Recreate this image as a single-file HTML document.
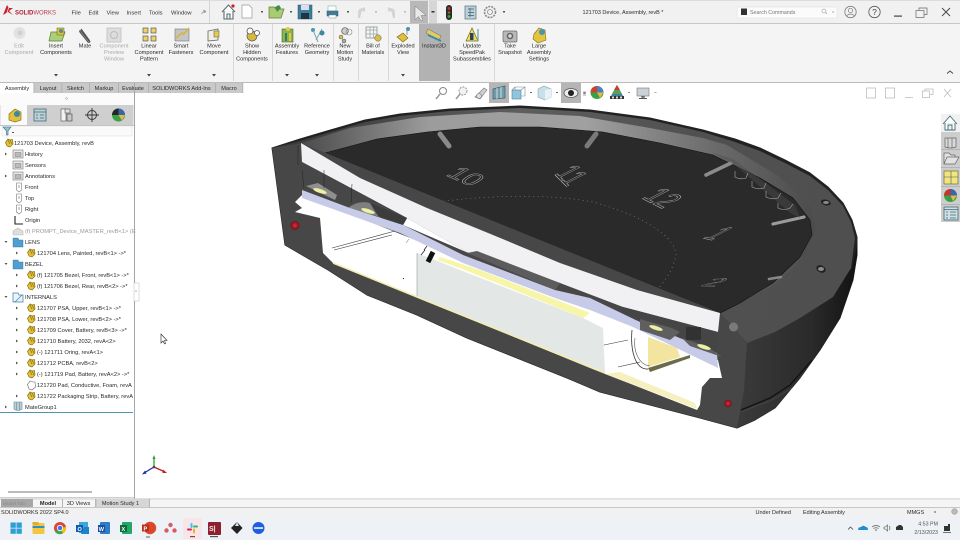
<!DOCTYPE html>
<html><head><meta charset="utf-8"><title>SOLIDWORKS</title>
<style>
html,body{margin:0;padding:0;width:960px;height:540px;overflow:hidden;background:#fff}
svg{display:block;position:absolute;left:0;top:0}
text{font-family:"Liberation Sans",sans-serif;font-size:5.6px;fill:#2a2a2a}
.r text{text-anchor:middle}
.m text{font-size:5.8px;fill:#333}
.t text{font-size:5.7px;fill:#2a2a2a}
.d{fill:#a8a8a8!important}
.n{fill:none;stroke:#b8b8b8;stroke-width:.28px;font-size:14px}
</style></head><body>
<svg width="960" height="540" viewBox="0 0 960 540" xmlns="http://www.w3.org/2000/svg">
<defs>
<linearGradient id="gw" x1="300" x2="820" y1="0" y2="0" gradientUnits="userSpaceOnUse"><stop offset="0" stop-color="#4a4a4a"/><stop offset=".25" stop-color="#9c9c9c"/><stop offset=".55" stop-color="#a0a0a0"/><stop offset=".8" stop-color="#6a6a6a"/><stop offset="1" stop-color="#4a4a4a"/></linearGradient>
<linearGradient id="gb" x1="300" x2="860" y1="110" y2="300" gradientUnits="userSpaceOnUse"><stop offset="0" stop-color="#3a3a3a"/><stop offset=".35" stop-color="#5e5e5e"/><stop offset=".65" stop-color="#505050"/><stop offset="1" stop-color="#4f4f4f"/></linearGradient>
<linearGradient id="gl" x1="740" x2="860" y1="0" y2="0" gradientUnits="userSpaceOnUse"><stop offset="0" stop-color="#3a3a3a"/><stop offset=".6" stop-color="#2a2a2a"/><stop offset="1" stop-color="#111"/></linearGradient>
<radialGradient id="red"><stop offset="0" stop-color="#d8303a"/><stop offset="1" stop-color="#70101a"/></radialGradient>
<g id="p"><path d="M-3.5,-.5 L-1,-4 1,-3 3.5,-3.5 4,1 1,4 -2,3Z" fill="#e3c23a" stroke="#8a7215" stroke-width=".7"/><path d="M-1,-3 L1,1 M1,-3 L3,1" stroke="#7a6510" stroke-width=".6"/></g>
<g id="f"><rect x="-5" y="-4" width="10" height="8" fill="#e8e8e8" stroke="#777" stroke-width=".6"/><rect x="-3" y="-1.5" width="6" height="4" fill="#bbb" stroke="#666" stroke-width=".4"/></g>
<g id="pl"><path d="M-2.5,-4 H2.5 V3 L0,5 -2.5,3Z" fill="#fff" stroke="#777" stroke-width=".6"/><path d="M0,-2 V1" stroke="#666" stroke-width=".6"/></g>
</defs>

<!-- title bar -->
<rect x="0" y="0" width="960" height="23" fill="#f1f1f1"/>
<rect x="0" y="0" width="960" height="1" fill="#dcdcdc"/>
<rect x="0" y="23" width="960" height="1" fill="#c6c6c6"/>
<rect x="0" y="24" width="960" height="58" fill="#f4f4f4"/>
<rect x="0" y="82" width="960" height="1" fill="#bcbcbc"/>
<path d="M3,15 L7,5 9,8 13,8 9,11 13,15 8,12Z" fill="#c8202c"/>
<path d="M6,15 L9,7" stroke="#f1f1f1" stroke-width=".7"/>
<text x="15" y="14.5" style="font-size:6px;font-weight:bold"><tspan style="fill:#b02030">SOLID</tspan><tspan style="font-weight:normal;fill:#b04050">WORKS</tspan></text>
<g class="m"><text x="71.5" y="14.5">File</text><text x="88.5" y="14.5">Edit</text><text x="106.5" y="14.5">View</text><text x="126.5" y="14.5">Insert</text><text x="149" y="14.5">Tools</text><text x="171" y="14.5">Window</text></g>
<path d="M201,14 L204,11 203,10 206,11 205,13 204,12Z" fill="#999" stroke="#999" stroke-width=".5"/>
<rect x="209" y="1" width="1" height="22" fill="#d4d4d4"/>
<!-- quick access -->
<path d="M222,12 L228.500,5 235,12 M224,11 V19 H233 V11 M227,19 V14 H230 V19" fill="#fff" stroke="#5a6b70" stroke-width="1.1"/>
<circle cx="233" cy="6" r="1.6" fill="#d02020"/>
<path d="M242,5 H249 L252,8 V18 H242Z" fill="#fdfdfd" stroke="#9a9a9a" stroke-width=".7"/>
<rect x="261" y="11" width="2" height="1.500" fill="#555"/>
<path d="M269,18 V7 H274 L276,9 H284 L281,18Z" fill="#a9cc70" stroke="#66783f" stroke-width=".7"/>
<path d="M275,7 L279,5 281,8 277,12Z" fill="#3f8e50"/>
<rect x="290" y="11" width="2" height="1.500" fill="#555"/>
<rect x="298" y="5" width="14" height="14" fill="#3c7f99" stroke="#27566a" stroke-width=".5"/><rect x="301" y="5" width="8" height="5" fill="#dde"/><rect x="301" y="13" width="8" height="6" fill="#234"/>
<rect x="318" y="11" width="2" height="1.500" fill="#555"/>
<rect x="328" y="6" width="8" height="5" fill="#fff" stroke="#6a8" stroke-width=".5"/><rect x="327" y="11" width="11" height="5" fill="#3f7c9a" stroke="#2b5a70" stroke-width=".5"/><rect x="329" y="15" width="7" height="3" fill="#fff" stroke="#777" stroke-width=".4"/>
<rect x="347" y="11" width="2" height="1.500" fill="#555"/>
<path d="M358,13 Q358,8 363,8 L365,7 V12 L363,11 Q361,11 361,14 L360,18 H358Z" fill="#d4d4d4"/>
<rect x="375" y="11" width="2" height="1.500" fill="#bbb"/>
<path d="M395,13 Q395,8 390,8 L388,7 V12 L390,11 Q392,11 392,14 L393,18 H395Z" fill="#d4d4d4"/>
<rect x="404" y="11" width="2" height="1.500" fill="#bbb"/>
<rect x="410" y="1" width="18" height="22" fill="#b8b8b8"/>
<rect x="429" y="1" width="8" height="22" fill="#d6d6d6"/>
<path d="M415,6 L415,20 418.500,16.500 421,21 423,20 421,15.500 426,15.500Z" fill="#e8e8e8" stroke="#777" stroke-width=".5"/>
<rect x="431.500" y="11" width="3" height="1.500" fill="#333"/>
<rect x="446" y="5" width="6" height="15" rx="3" fill="#2a2a2a"/><circle cx="449" cy="8.500" r="1.500" fill="#c03030"/><circle cx="449" cy="12.500" r="1.300" fill="#8a6a20"/><circle cx="449" cy="16.500" r="1.500" fill="#35a040"/>
<rect x="465" y="6" width="11" height="13" fill="#bcd0d8" stroke="#4d7080" stroke-width=".7"/><path d="M470,8 V17 M468,9 H474 M468,12.500 H474 M468,15.500 H474" stroke="#3d6070" stroke-width=".7"/>
<circle cx="490" cy="12" r="5.500" fill="none" stroke="#8a8a8a" stroke-width="1.600" stroke-dasharray="2 1"/><circle cx="490" cy="12" r="2.500" fill="none" stroke="#8a8a8a" stroke-width=".8"/>
<rect x="503" y="11" width="2" height="1.500" fill="#555"/>
<text x="623" y="14" style="text-anchor:middle;font-size:5.5px">121703 Device, Assembly, revB *</text>
<!-- search -->
<rect x="737" y="7" width="100" height="11" fill="#fbfbfb" stroke="#dcdcdc" stroke-width=".5"/>
<rect x="741" y="8.500" width="6" height="6.500" fill="#333"/>
<text x="750" y="14" style="font-size:5.3px;fill:#777">Search Commands</text>
<circle cx="824" cy="11" r="2" fill="none" stroke="#999" stroke-width=".6"/><path d="M825.500,12.500 L827,14" stroke="#999" stroke-width=".6"/>
<rect x="832" y="11.500" width="2" height="1" fill="#aaa"/>
<circle cx="850.500" cy="12" r="5.700" fill="none" stroke="#7a7a7a" stroke-width=".8"/><circle cx="850.500" cy="10.500" r="2.200" fill="none" stroke="#7a7a7a" stroke-width=".7"/><path d="M846.500,16 Q850.500,12 854.500,16" fill="none" stroke="#7a7a7a" stroke-width=".7"/>
<circle cx="874.500" cy="12" r="5.700" fill="none" stroke="#555" stroke-width=".8"/><text x="874.500" y="15" style="text-anchor:middle;font-size:8.500px;fill:#444">?</text>
<rect x="894" y="15.500" width="8" height="1.200" fill="#444"/>
<rect x="916" y="10.500" width="8" height="7" fill="#f1f1f1" stroke="#666" stroke-width=".7"/><path d="M919,10 V8 H927 V14.500 H924.500" fill="none" stroke="#666" stroke-width=".7"/>
<path d="M942,8 L950,16 M950,8 L942,16" stroke="#444" stroke-width=".9"/>

<!-- ribbon separators -->
<g fill="#d8d8d8"><rect x="233" y="24" width="1" height="57"/><rect x="272" y="24" width="1" height="57"/><rect x="333" y="24" width="1" height="57"/><rect x="358" y="24" width="1" height="57"/><rect x="388" y="24" width="1" height="57"/><rect x="494" y="24" width="1" height="57"/></g>
<rect x="419" y="24" width="31" height="57" fill="#b2b2b2"/>
<!-- ribbon icons -->
<g opacity=".75"><circle cx="19.500" cy="33" r="6" fill="#dcdcdc"/><circle cx="20" cy="33" r="2.500" fill="#c4c4c4"/></g>
<path d="M49,41 L51,32 H57 L60,29 65,32 62,41Z" fill="#a9cf79" stroke="#5f7d3a" stroke-width=".7"/><rect x="57" y="28" width="7" height="7" fill="#e1bf3a" stroke="#6d6010" stroke-width=".5"/><circle cx="61" cy="31" r="2" fill="#4a8fa8"/>
<path d="M81,29 L89,40 Q91,43 88,42 L80,32 Q79,30 81,31 L89,41" fill="none" stroke="#555" stroke-width="1.200"/>
<rect x="107" y="28" width="14" height="14" fill="#ddd" stroke="#c8c8c8"/><circle cx="114" cy="35" r="3.500" fill="none" stroke="#bbb"/>
<g fill="#ead16b" stroke="#444" stroke-width=".6"><rect x="143" y="28" width="5" height="5"/><rect x="151" y="28" width="5" height="5"/><rect x="143" y="36" width="5" height="5"/><rect x="151" y="36" width="5" height="5"/></g>
<rect x="175" y="29" width="14" height="12" fill="#c4c6c6" stroke="#777" stroke-width=".6"/><path d="M183,35 L189,28 M176,38 L183,32" stroke="#d8b53a" stroke-width="1.600"/>
<path d="M208,31 L218,29 V40 L208,41Z" fill="#efefe5" stroke="#666" stroke-width=".8"/><rect x="214" y="31" width="5" height="6" fill="#e6c94a" stroke="#555" stroke-width=".5"/>
<circle cx="252" cy="36" r="5" fill="#d9b83e" stroke="#555" stroke-width=".7"/><circle cx="250" cy="31" r="3" fill="#fff" stroke="#555" stroke-width=".8"/><circle cx="257" cy="33" r="2.500" fill="#fff" stroke="#555" stroke-width=".8"/>
<rect x="282" y="29" width="11" height="13" fill="#89b54a" stroke="#4b6a22" stroke-width=".6"/><rect x="285" y="33" width="2" height="8" fill="#2f7b78"/><rect x="289" y="33" width="2" height="8" fill="#e7c848"/><circle cx="288" cy="29" r="2" fill="#e7c848"/>
<circle cx="313" cy="30" r="2" fill="#4a94b0"/><path d="M313,30 L318,42 M322,29 L316,40" stroke="#7aa" stroke-width="1"/><circle cx="322" cy="33" r="2.500" fill="#3f86a2"/>
<circle cx="345" cy="31" r="3.300" fill="#ccc" stroke="#555" stroke-width=".7"/><circle cx="349" cy="32" r="3" fill="none" stroke="#888" stroke-width=".6"/><circle cx="341" cy="37" r="2" fill="#e0c040" stroke="#555" stroke-width=".5"/><circle cx="344" cy="41" r="2" fill="#aaa" stroke="#555" stroke-width=".5"/>
<rect x="366" y="27" width="11" height="11" fill="#f3f3f3" stroke="#7a8a7f" stroke-width=".7"/><path d="M366,30 H377 M366,34 H377 M370,27 V38 M373.500,27 V38" stroke="#7a8a7f" stroke-width=".5"/><circle cx="378" cy="38" r="3.200" fill="#d9bf42" stroke="#556" stroke-width=".5"/>
<path d="M397,37 L403,33 408,38 403,42Z" fill="#e0bf3c" stroke="#7a6312" stroke-width=".6"/><path d="M407,30 V35" stroke="#777" stroke-width=".7"/><circle cx="408" cy="29" r="2" fill="#4a94b0"/>
<path d="M428,29 L441,36 439,40 426,33Z" fill="#dfcd63" stroke="#666" stroke-width=".5"/><path d="M428,35 L441,41" stroke="#3a8aa8" stroke-width="2"/>
<path d="M466,41 L472,28 478,41Z" fill="#f4db5e" stroke="#6a6a20" stroke-width=".7"/><rect x="470" y="33" width="3.500" height="7" fill="#2c4260"/><path d="M478,29 V41" stroke="#6aa" stroke-width="1.300"/>
<rect x="503" y="31" width="14" height="11" rx="1.500" fill="#b8b8b8" stroke="#666" stroke-width=".7"/><circle cx="510" cy="36" r="3.300" fill="#666"/><circle cx="510" cy="36" r="1.700" fill="#ddd"/>
<path d="M534,34 L539,28 545,30 546,40 538,43 533,39Z" fill="#e1c53f" stroke="#867116" stroke-width=".6"/><circle cx="542" cy="32" r="3" fill="#4a95ad"/>
<g fill="#444"><path d="M54,74 H58 L56,76.500Z"/><path d="M147,74 H151 L149,76.500Z"/><path d="M212,74 H216 L214,76.500Z"/><path d="M285,74 H289 L287,76.500Z"/><path d="M315,74 H319 L317,76.500Z"/><path d="M401,74 H405 L403,76.500Z"/></g>
<path d="M947,73.500 L950,71 953,73.500" fill="none" stroke="#444" stroke-width=".9"/>
<!-- ribbon labels -->
<g class="r">
<text x="19" y="47.500" class="d">Edit</text><text x="19" y="54" class="d">Component</text>
<text x="56" y="47.500">Insert</text><text x="56" y="54">Components</text>
<text x="85" y="47.500">Mate</text>
<text x="114" y="47.500" class="d">Component</text><text x="114" y="54" class="d">Preview</text><text x="114" y="60.500" class="d">Window</text>
<text x="149" y="47.500">Linear</text><text x="149" y="54">Component</text><text x="149" y="60.500">Pattern</text>
<text x="181" y="47.500">Smart</text><text x="181" y="54">Fasteners</text>
<text x="214" y="47.500">Move</text><text x="214" y="54">Component</text>
<text x="252" y="47.500">Show</text><text x="252" y="54">Hidden</text><text x="252" y="60.500">Components</text>
<text x="287" y="47.500">Assembly</text><text x="287" y="54">Features</text>
<text x="317" y="47.500">Reference</text><text x="317" y="54">Geometry</text>
<text x="345" y="47.500">New</text><text x="345" y="54">Motion</text><text x="345" y="60.500">Study</text>
<text x="373" y="47.500">Bill of</text><text x="373" y="54">Materials</text>
<text x="403" y="47.500">Exploded</text><text x="403" y="54">View</text>
<text x="434" y="47.500">Instant3D</text>
<text x="472" y="47.500">Update</text><text x="472" y="54">SpeedPak</text><text x="472" y="60.500">Subassemblies</text>
<text x="510" y="47.500">Take</text><text x="510" y="54">Snapshot</text>
<text x="539" y="47.500">Large</text><text x="539" y="54">Assembly</text><text x="539" y="60.500">Settings</text>
</g>
<!-- tabs -->
<rect x="34" y="83" width="209" height="10" fill="#c9c9c9"/>
<g fill="#a8a8a8"><rect x="33.500" y="83" width=".7" height="10"/><rect x="61.500" y="83" width=".7" height="10"/><rect x="89" y="83" width=".7" height="10"/><rect x="118" y="83" width=".7" height="10"/><rect x="148" y="83" width=".7" height="10"/><rect x="215" y="83" width=".7" height="10"/><rect x="242.500" y="83" width=".7" height="10"/></g>
<g class="r"><text x="17" y="90">Assembly</text><text x="48" y="90">Layout</text><text x="75.500" y="90">Sketch</text><text x="104" y="90">Markup</text><text x="133" y="90">Evaluate</text><text x="181.500" y="90">SOLIDWORKS Add-Ins</text><text x="229" y="90">Macro</text></g>

<!-- 3D MODEL -->
<path d="M272,148 L300,139 327,131 365,120 400,114 450,109 520,106 590,110 650,118 703,130 735,139 760,148 785,160 810,173 828,187 843,203 852,220 857,237 857,255 853,280 840,318 820,350 800,378 775,408 755,420 737,428 700,418 650,405 600,392 567,378 517,358 467,338 417,315 367,295 328,270 285,245Z" fill="#222" stroke="#222" stroke-linejoin="round"/>
<!-- outer wall right -->
<path d="M747,343 L790,322 830,296 852,268 857,245 857,255 853,280 840,318 820,350 800,378 775,408 755,420 737,428Z" fill="url(#gl)"/>
<path d="M741,410 L770,398 790,385 812,360" fill="none" stroke="#111" stroke-width="1.300"/>
<path d="M741,412 L772,400 792,388" fill="none" stroke="#555" stroke-width=".5"/>
<!-- bezel -->
<path d="M272,148 L300,141 327,133 365,122 400,116 450,111 520,108 590,112 650,120 703,132 735,142 760,151 785,163 810,176 828,190 843,206 851,222 855,238 851,268 833,297 800,318 775,332 747,343 720,313 301,143Z" fill="url(#gb)"/>
<!-- inner wall -->
<path d="M302,143 L350,128 420,117 500,112 580,116 650,128 703,138 727,145 777,175 810,205 816,228 805,258 773,285 740,303 720,313 560,263 460,230 360,180Z" fill="url(#gw)"/>
<!-- dial face -->
<path d="M325,153 L377,139 427,132 480,127 540,127 603,132 660,143 713,155 760,178 793,198 810,220 812,235 800,257 773,283 740,303 720,313 637,290 560,263 493,235 427,208 360,178Z" fill="#2a2a2a" stroke="#111" stroke-width=".6"/>
<!-- dial ticks -->
<g stroke-linecap="round" fill="none">
<path d="M440,134 L449,146" stroke-width="5" stroke="#8a8a8a"/>
<path d="M596,134 L587,146" stroke-width="5" stroke="#7a7a7a"/>
<path d="M706,175 L731,163" stroke-width="3.600" stroke="#8c8c8c"/>
<path d="M773,224 L804,217" stroke-width="3.200" stroke="#9c9c9c"/>
<path d="M769,279 L781,277" stroke-width="2.600" stroke="#888"/>
</g>
<path d="M713,153 L733,159 795,205 800,218 790,213 735,165Z" fill="#4d4d4d" opacity=".45"/>
<g fill="none" stroke="#aaa" stroke-width=".6">
<path d="M735,171 L735,177 Q740,180 746,178 L748,173"/><path d="M752,181 L752,187 Q758,190 764,188 L766,183"/><path d="M766,191 L766,197 Q772,200 778,198 L781,193"/><path d="M778,203 L778,208 Q784,211 790,208 L793,204"/>
</g>
<!-- dial numbers -->
<text transform="matrix(1.700 .75 -1.600 .95 445 175)" class="n">10</text>
<text transform="matrix(.9 .9 -2.200 1.100 554 174)" class="n">11</text>
<text transform="matrix(1.400 .7 -2.200 1.150 641 198)" class="n">12</text>
<text transform="matrix(1.400 .3 -2.400 1.200 702 238)" class="n">1</text>
<text transform="matrix(1.900 .1 -1.600 .85 700 286)" class="n">2</text>
<path d="M430,203 C470,197 540,192 593,202 C640,215 675,235 676,255 C672,275 660,287 652,294" fill="none" stroke="#8e8e8e" stroke-width=".6" stroke-dasharray="1 3.500"/>
<!-- screws -->
<ellipse cx="826" cy="202.500" rx="5" ry="2.800" fill="#222" transform="rotate(15 826 202)"/><ellipse cx="826" cy="202.500" rx="3" ry="1.500" fill="#8a8a8a"/>
<ellipse cx="821" cy="269" rx="5" ry="3.500" fill="#222" transform="rotate(25 821 269)"/><ellipse cx="821" cy="269" rx="3" ry="2" fill="#8a8a8a"/>
<!-- section left face -->
<path d="M272,148 L301,143 720,313 747,343 744,390 737,428 700,418 650,405 600,392 567,378 517,358 467,338 417,315 367,295 328,270 285,245Z" fill="#474747"/>
<!-- section white cavity -->
<path d="M302,195 L718,360 722,378 710,378 702,387 700,405 697,410 590,368 417,297 333,263 323,253 320,218 295,212 302,208 295,202Z" fill="#fff"/>
<!-- band white -->
<path d="M301,143 L360,178 427,208 493,235 560,263 637,290 720,313 718,332 623,307 560,283 467,252 407,218 302,162Z" fill="#f1f1f3"/>
<path d="M407,218 L467,252 555,290 403,225Z" fill="#fff"/>
<!-- dark chamber behind -->
<path d="M302,162 L407,218 403,225 350,208 302,190Z" fill="#474747"/>
<path d="M623,307 L718,332 717,353 623,318Z" fill="#454545"/>
<!-- leds -->
<path d="M306,186 L318,183 337,195 335,200Z" fill="#8f8f8f"/><ellipse cx="320" cy="191" rx="7" ry="2" fill="#eef0a4" transform="rotate(18 320 191)"/>
<path d="M348,208 Q358,200 370,203 L380,217 Q362,212 348,208Z" fill="#7f7f7f"/><ellipse cx="368" cy="211" rx="7" ry="2" fill="#eef0a4" transform="rotate(18 368 211)"/>
<path d="M370,203 L407,218 403,225 378,216Z" fill="#3c3c3c"/>
<!-- lilac band -->
<path d="M302,190 L350,208 403,225 463,255 555,290 590,298 640,322 717,353 718,368 633,327 590,310 555,298 463,263 400,233 302,198Z" fill="#c8cbe8"/>
<path d="M467,253 L477,251 560,283 555,290 472,255Z" fill="#5c5c5c"/>
<path d="M640,319 L672,328 680,332 670,340 640,330Z" fill="#5f5f5f"/>
<ellipse cx="656" cy="328" rx="7" ry="2" fill="#eef0a4" transform="rotate(18 656 328)"/>
<path d="M682,338 L708,347 722,357 690,346Z" fill="#5f5f5f"/>
<ellipse cx="704" cy="347" rx="7" ry="2" fill="#eef0a4" transform="rotate(18 704 347)"/>
<rect x="686" y="327" width="15" height="13" fill="#323232"/>
<!-- gray block -->
<path d="M417,253 L440,262 465,272 583,318 603,328 605,373 417,297Z" fill="#e3e7e6"/>
<path d="M417,253 V297" stroke="#888" stroke-width=".5"/>
<path d="M440,257 L480,270 590,313 583,318 465,270 438,260Z" fill="#f6f5a8"/>
<path d="M333,263 L417,297 605,373" fill="none" stroke="#f3eeb0" stroke-width="1.500"/>
<path d="M605,374 L697,409 695,403 620,372Z" fill="#f6efc0"/>
<!-- battery -->
<path d="M648,337 L677,348 680,357 648,367Z" fill="#f3e5a0"/>
<path d="M648,368 L690,355 690,358 650,372Z" fill="#6b6b4a"/>
<path d="M632,330 C630,352 636,370 648,369" fill="none" stroke="#333" stroke-width=".8"/>
<path d="M635,338 C633,353 640,365 650,366" fill="none" stroke="#555" stroke-width=".6"/>
<path d="M604,345 L628,340 M618,367 L640,362" stroke="#333" stroke-width=".6"/>
<!-- internal lines -->
<path d="M332,248 L395,231 M334,250 L392,235" stroke="#333" stroke-width=".6"/>
<path d="M428,262 L433,252" stroke="#111" stroke-width="5"/>
<path d="M424,250 L427,246 M421,255 L425,250" stroke="#111" stroke-width=".7"/>
<path d="M406,243 L409,239" stroke="#666" stroke-width=".5"/>
<rect x="403" y="278" width="1" height="1" fill="#222"/>
<path d="M298,145 L298,165 M302,170 L304,188 M324,170 L324,188 M352,184 L351,203" stroke="#222" stroke-width=".5"/>
<circle cx="295" cy="225.500" r="4.500" fill="url(#red)"/>
<path d="M299,226 L315,222" stroke="#8a3030" stroke-width=".4"/>
<circle cx="728" cy="403.500" r="3.800" fill="url(#red)"/>
<circle cx="733.500" cy="327" r="4.500" fill="#7a7a7a"/>

<!-- heads up toolbar -->
<rect x="489" y="83" width="20" height="20" fill="#b5b5b5"/>
<rect x="561" y="83" width="20" height="20" fill="#b5b5b5"/>
<circle cx="443" cy="91" r="3.500" fill="#fff" stroke="#888" stroke-width="1"/><path d="M440,94 L436,99" stroke="#999" stroke-width="1.500"/>
<circle cx="463" cy="91" r="4" fill="#f2f2f2" stroke="#999" stroke-width="1" stroke-dasharray="2 1"/><path d="M460,94 L456,99" stroke="#999" stroke-width="1.500"/>
<path d="M475,97 L484,88 487,90 480,99Z" fill="#cfcfcf" stroke="#888" stroke-width=".7"/><circle cx="479" cy="96" r="2.500" fill="#ddd" stroke="#777" stroke-width=".6"/>
<path d="M493,89 L505,86 V98 L493,99Z" fill="#6f9cac" stroke="#40606c" stroke-width=".7"/><path d="M497,88 V99 M501,87 V98" stroke="#e8eef0" stroke-width=".8"/>
<rect x="512" y="90" width="9" height="9" fill="#8fc5de" stroke="#5a7f8f" stroke-width=".6"/><path d="M515,90 V87 H525 V96 H521 M515,87 L512,90 M525,87 L521,90" fill="none" stroke="#7a8a90" stroke-width=".6"/>
<rect x="530" y="92" width="2" height="1" fill="#666"/>
<path d="M538,89 L544,86 551,89 V97 L545,100 538,97Z" fill="#c7e0ea" stroke="#8aa" stroke-width=".6"/><path d="M545,90 V100 L551,97 V89Z" fill="#e8f1f5"/>
<rect x="556" y="92" width="2" height="1" fill="#666"/>
<ellipse cx="571" cy="93" rx="7" ry="4.500" fill="#eee" stroke="#555" stroke-width=".8"/><circle cx="571" cy="93" r="3" fill="#222"/>
<rect x="583" y="91" width="3" height="5" fill="#d0d0d0"/><rect x="583.500" y="92.500" width="2" height="1" fill="#333"/>
<circle cx="597" cy="92.500" r="6.500" fill="#3aa046"/><path d="M597,92.500 L590.500,92.500 A6.500,6.500 0 0 1 597,86Z" fill="#d0402a"/><path d="M597,92.500 V86 A6.500,6.500 0 0 1 603.500,92.500Z" fill="#4a7fc0"/><path d="M597,92.500 L603.500,92.500 L600,98Z" fill="#e8b840"/>
<path d="M611,96 L617,85 623,96Z" fill="#3f7fa0"/><path d="M612,94 L617,86 622,94Z" fill="#5aa050"/><path d="M614,90 L617,85 620,90Z" fill="#c04030"/><rect x="610" y="96" width="14" height="3" fill="#333"/><rect x="612" y="96.500" width="2" height="2" fill="#ddd"/><rect x="616" y="96.500" width="2" height="2" fill="#ddd"/><rect x="620" y="96.500" width="2" height="2" fill="#ddd"/>
<rect x="628" y="92" width="2" height="1" fill="#888"/>
<rect x="637" y="88" width="12" height="8" fill="#c8d2d8" stroke="#777" stroke-width=".6"/><path d="M641,97 H645 M643,96 V98" stroke="#555"/><rect x="639" y="98" width="8" height="1" fill="#555"/>
<rect x="654.500" y="92" width="2" height="1" fill="#aaa"/>
<!-- graphics window controls -->
<g fill="none" stroke="#bdbdbd" stroke-width=".8"><rect x="866.500" y="88" width="9" height="10"/><rect x="885.500" y="88" width="9" height="10"/><path d="M905,97.500 H913"/><rect x="922.500" y="91" width="7" height="6.500"/><path d="M925,91 V89 H933 V94.500 H930"/><path d="M944,89 L951,97 M951,89 L944,97"/></g>

<!-- right task pane -->
<rect x="941" y="114" width="19" height="108" fill="#cdcdcd"/>
<rect x="941" y="114" width="19" height="18" fill="#f1f1f1"/>
<g fill="#a9a9a9"><rect x="941" y="149" width="19" height=".7"/><rect x="941" y="167" width="19" height=".7"/><rect x="941" y="186" width="19" height=".7"/><rect x="941" y="204" width="19" height=".7"/></g>
<path d="M943,124 L950,116 957,124 M945,123 V130 H955 V123 M948,130 V125 H952 V130" fill="#fff" stroke="#3f6b78" stroke-width=".9"/>
<path d="M945,138 H956 V147 Q950,149 945,147Z M948,138 V148 M952,138 V148" fill="#d8d8d8" stroke="#666" stroke-width=".7"/>
<path d="M944,164 V153 H949 L951,155 H955 V157 M944,164 L947,157 H959 L955,164Z" fill="#e2e2e2" stroke="#666" stroke-width=".7"/>
<rect x="944" y="171" width="14" height="13" fill="#f0e67f" stroke="#6f6f30" stroke-width=".7"/><path d="M951,171 V184 M944,177 H958" stroke="#555" stroke-width=".6"/>
<circle cx="950.500" cy="195.500" r="6.500" fill="#3aa046"/><path d="M950.500,195.500 H944 A6.500,6.500 0 0 1 950.500,189Z" fill="#c8342a"/><path d="M950.500,195.500 V189 A6.500,6.500 0 0 1 957,195.500Z" fill="#3a63b0"/><path d="M950.500,195.500 H957 L953,201Z" fill="#e8b840"/>
<rect x="944" y="207" width="14" height="13" fill="#cfdfe4" stroke="#3f6b78" stroke-width=".8"/><path d="M944,209.500 H958 M946,212 H948 M950,212 H956 M946,215 H948 M950,215 H956 M946,218 H948 M950,218 H956" stroke="#3f6b78" stroke-width=".8"/>

<!-- left panel -->
<rect x="0" y="93" width="134" height="406" fill="#fff"/>
<rect x="134" y="83" width="1" height="416" fill="#a6a6a6"/>
<rect x="0" y="93" width="134" height="12" fill="#fbfbfb"/>
<circle cx="66.500" cy="98.500" r="1" fill="none" stroke="#999" stroke-width=".5"/>
<rect x="0" y="105" width="134" height="20" fill="#e6e6e6"/>
<rect x="1" y="105" width="26" height="20" fill="#fafafa"/>
<rect x="27" y="105" width="26" height="20" fill="#cfcfcf"/><rect x="53" y="105" width="26" height="20" fill="#cfcfcf"/><rect x="79" y="105" width="26" height="20" fill="#cfcfcf"/><rect x="105" y="105" width="28" height="20" fill="#cfcfcf"/>
<path d="M9,114 L15,109 21,112 21,120 15,122 9,120Z" fill="#e2c03a" stroke="#7a6512" stroke-width=".6"/><circle cx="17" cy="114" r="3" fill="#3d87a3"/>
<rect x="34" y="109" width="12" height="12" fill="#bcd0d6" stroke="#3f6b78" stroke-width=".8"/><path d="M34,112 H46 M36,115 H38 M40,115 H44 M36,118 H38 M40,118 H44" stroke="#3f6b78" stroke-width=".7"/>
<rect x="61" y="109" width="5" height="12" fill="#f2f2f2" stroke="#666" stroke-width=".7"/><rect x="67" y="114" width="5" height="7" fill="#c7c7c7" stroke="#555" stroke-width=".7"/><rect x="65" y="109" width="5" height="4" fill="#ddd" stroke="#555" stroke-width=".6"/>
<circle cx="92" cy="115" r="4.500" fill="none" stroke="#333" stroke-width=".9"/><path d="M92,108 V122 M85,115 H99" stroke="#333" stroke-width=".9"/>
<circle cx="118.500" cy="115" r="6.500" fill="#3aa046"/><path d="M118.500,115 H112 A6.500,6.500 0 0 1 118.500,108.500Z" fill="#262626"/><path d="M118.500,115 V108.500 A6.500,6.500 0 0 1 125,115Z" fill="#3a63b0"/><path d="M118.500,115 H125 L122,120.500Z" fill="#e8b840"/>
<rect x="0" y="125" width="134" height=".7" fill="#aaa"/>
<rect x="2" y="126" width="130" height="10" fill="#fafafa" stroke="#ddd" stroke-width=".5"/>
<path d="M3,127 H11 L8,131 V135 H6.500 V131Z" fill="#8fc4d8" stroke="#3f6b78" stroke-width=".6"/>
<rect x="12" y="132" width="2" height="1" fill="#555"/>
<use href="#p" x="9" y="143"/>
<g class="t">
<text x="14" y="145">121703 Device, Assembly, revB</text>
<text x="25" y="156">History</text>
<text x="25" y="167">Sensors</text>
<text x="25" y="178">Annotations</text>
<text x="25" y="189">Front</text>
<text x="25" y="200">Top</text>
<text x="25" y="211">Right</text>
<text x="25" y="222">Origin</text>
<text x="25" y="233" style="fill:#9a9a9a">(f) PROMPT_Device_MASTER_revB&lt;1&gt; (E</text>
<text x="25" y="244">LENS</text>
<text x="37" y="255">121704 Lens, Painted, revB&lt;1&gt; -&gt;*</text>
<text x="25" y="266">BEZEL</text>
<text x="37" y="277">(f) 121705 Bezel, Front, revB&lt;1&gt; -&gt;*</text>
<text x="37" y="288">(f) 121706 Bezel, Rear, revB&lt;2&gt; -&gt;*</text>
<text x="25" y="299">INTERNALS</text>
<text x="37" y="310">121707 PSA, Upper, revB&lt;1&gt; -&gt;*</text>
<text x="37" y="321">121708 PSA, Lower, revB&lt;2&gt; -&gt;*</text>
<text x="37" y="332">121709 Cover, Battery, revB&lt;3&gt; -&gt;*</text>
<text x="37" y="343">121710 Battery, 2032, revA&lt;2&gt;</text>
<text x="37" y="354">(-) 121711 Oring, revA&lt;1&gt;</text>
<text x="37" y="365">121712 PCBA, revB&lt;2&gt;</text>
<text x="37" y="376">(-) 121719 Pad, Battery, revA&lt;2&gt; -&gt;*</text>
<text x="37" y="387">121720 Pad, Conductive, Foam, revA</text>
<text x="37" y="398">121722 Packaging Strip, Battery, revA</text>
<text x="25" y="409">MateGroup1</text>
</g>
<g><use href="#f" x="18" y="154"/><use href="#f" x="18" y="165"/><use href="#f" x="18" y="176"/>
<use href="#pl" x="19" y="187"/><use href="#pl" x="19" y="198"/><use href="#pl" x="19" y="209"/></g>
<path d="M15,216 V224 H23" fill="none" stroke="#222" stroke-width="1.100"/>
<path d="M13,231 L18,228 23,231 V235 H13Z" fill="#ddd" stroke="#bbb" stroke-width=".6"/>
<g fill="#4f9fd0" stroke="#2d6d94" stroke-width=".4"><path d="M13,238 H18 L19,240 H23 V247 H13Z"/><path d="M13,260 H18 L19,262 H23 V269 H13Z"/></g>
<path d="M13,293 H18 L19,295 H23 V302 H13Z" fill="#eaf4fa" stroke="#3a7ca0" stroke-width=".7"/><path d="M15,302 L22,295" stroke="#3a7ca0" stroke-width=".6"/>
<use href="#p" x="31" y="253"/><use href="#p" x="31" y="275"/><use href="#p" x="31" y="286"/><use href="#p" x="31" y="308"/><use href="#p" x="31" y="319"/><use href="#p" x="31" y="330"/><use href="#p" x="31" y="341"/><use href="#p" x="31" y="352"/><use href="#p" x="31" y="363"/><use href="#p" x="31" y="374"/><use href="#p" x="31" y="396"/>
<path d="M27.500,384.500 L30,381 33,382 35,382 35.500,387 32,390 29,389Z" fill="#fff" stroke="#666" stroke-width=".6"/>
<path d="M14,402 H22 V409 Q18,412 14,409Z M16.500,402 V410 M19.500,402 V410" fill="#b7cfd6" stroke="#6c8a92" stroke-width=".6"/>
<!-- expanders -->
<g fill="#555"><path d="M5,152.500 L7,154 5,155.500Z"/><path d="M5,174.500 L7,176 5,177.500Z"/><path d="M4.500,241 H7.500 L6,243Z"/><path d="M4.500,263 H7.500 L6,265Z"/><path d="M4.500,296 H7.500 L6,298Z"/><path d="M5,405.500 L7,407 5,408.500Z"/>
<path d="M16,251.500 L18,253 16,254.500Z"/><path d="M16,273.500 L18,275 16,276.500Z"/><path d="M16,284.500 L18,286 16,287.500Z"/><path d="M16,306.500 L18,308 16,309.500Z"/><path d="M16,317.500 L18,319 16,320.500Z"/><path d="M16,328.500 L18,330 16,331.500Z"/><path d="M16,339.500 L18,341 16,342.500Z"/><path d="M16,350.500 L18,352 16,353.500Z"/><path d="M16,361.500 L18,363 16,364.500Z"/><path d="M16,372.500 L18,374 16,375.500Z"/><path d="M16,394.500 L18,396 16,397.500Z"/></g>
<rect x="0" y="412" width="133" height="1" fill="#4f93b4"/>
<rect x="134" y="283" width="5" height="18" fill="#fff" stroke="#bbb" stroke-width=".5"/><circle cx="136" cy="291" r=".8" fill="#aaa"/>
<rect x="8" y="491.500" width="84" height="1" fill="#777"/>
<rect x="0" y="497" width="134" height="1" fill="#d0d0d0"/>

<!-- cursor -->
<path d="M161,334 V343 L163,341 164.500,344 165.500,343.500 164.500,340.500 167,340.500Z" fill="#fff" stroke="#222" stroke-width=".6"/>
<!-- triad -->
<path d="M154,467 V457" stroke="#2aa02a" stroke-width="1.300"/><path d="M154,467 L165,472" stroke="#c02020" stroke-width="1.300"/><path d="M154,467 L144,473" stroke="#2030a0" stroke-width="1.300"/>
<path d="M152.500,459 L154,455 155.500,459Z" fill="#2aa02a"/><path d="M163,469.500 L167,473 162.500,473Z" fill="#c02020"/><path d="M145,470.500 L142,474.500 146.500,473.500Z" fill="#2030a0"/>
<circle cx="154" cy="467" r="1.300" fill="#444"/>

<!-- bottom tabs -->
<rect x="0" y="499" width="960" height="8" fill="#f5f5f5"/>
<rect x="0" y="498.500" width="960" height=".8" fill="#c0c0c0"/>
<rect x="1" y="499" width="32" height="8" fill="#a6a6a6"/>
<rect x="95" y="499" width="54" height="8" fill="#d6d6d6"/>
<rect x="62" y="499" width=".7" height="8" fill="#999"/><rect x="95.500" y="499" width=".7" height="8" fill="#999"/><rect x="149" y="499" width=".7" height="8" fill="#999"/>
<text x="48" y="505" style="text-anchor:middle;font-weight:bold;fill:#222">Model</text>
<text x="78.500" y="505" style="text-anchor:middle">3D Views</text>
<text x="120.500" y="505" style="text-anchor:middle">Motion Study 1</text>
<text x="3" y="505" style="font-size:4.800px;fill:#8a8a8a">Model Tab</text>
<rect x="0" y="507" width="960" height=".8" fill="#b8b8b8"/>
<!-- status -->
<rect x="0" y="508" width="960" height="9" fill="#f1f1f1"/>
<text x="1" y="514" style="font-size:5.500px">SOLIDWORKS 2022 SP4.0</text>
<text x="755.500" y="514" style="font-size:5.500px">Under Defined</text>
<text x="803" y="514" style="font-size:5.500px">Editing Assembly</text>
<text x="907" y="514" style="font-size:5.500px">MMGS</text>
<rect x="934" y="511.500" width="2" height="1" fill="#555"/>
<circle cx="954.500" cy="511.500" r="2.800" fill="#bbb" stroke="#888" stroke-width=".5"/>
<!-- taskbar -->
<rect x="0" y="517" width="960" height="23" fill="#eef1f5"/>
<g fill="#2a9fd8"><rect x="10.500" y="522.500" width="5.300" height="5.300"/><rect x="16.500" y="522.500" width="5.300" height="5.300"/><rect x="10.500" y="528.500" width="5.300" height="5.300"/><rect x="16.500" y="528.500" width="5.300" height="5.300"/></g>
<rect x="32.500" y="523" width="12" height="11" rx="1" fill="#f3c640"/><rect x="32.500" y="526" width="12" height="2" fill="#2f8fc0"/><rect x="32.500" y="522" width="6" height="3" fill="#e7ac24"/>
<circle cx="60" cy="528" r="6" fill="#db4437"/><path d="M60,528 L55,532 A6,6 0 0 0 63,533.200Z" fill="#3aa757"/><path d="M60,528 L66,527 A6,6 0 0 1 63,533.200Z" fill="#fbbc05"/><circle cx="60" cy="528" r="2.700" fill="#3b78e7" stroke="#fff" stroke-width=".8"/>
<rect x="79" y="522" width="9" height="11" fill="#3da6dc"/><rect x="76" y="525" width="7" height="7" fill="#0f5fa8"/><path d="M84,527 H89 V534 H81" fill="#1a83c9"/><text x="77.500" y="531" style="font-size:5.500px;fill:#fff;font-weight:bold">O</text>
<rect x="100" y="522" width="10" height="12" rx="1" fill="#2e7bc7"/><rect x="98" y="525" width="7" height="7" fill="#1c4f9e"/><text x="98.800" y="530.800" style="font-size:5.500px;fill:#fff;font-weight:bold">W</text>
<rect x="122" y="522" width="10" height="12" rx="1" fill="#27a567"/><rect x="120" y="525" width="7" height="7" fill="#0c6b3a"/><text x="121.500" y="530.800" style="font-size:5.500px;fill:#fff;font-weight:bold">X</text>
<circle cx="150" cy="528" r="6.200" fill="#d9482b"/><rect x="142" y="524.500" width="7" height="7" fill="#b7301a"/><text x="143.500" y="530.500" style="font-size:5.500px;fill:#fff;font-weight:bold">P</text>
<rect x="146" y="536.500" width="4" height="1" fill="#666"/>
<g fill="#d85a66"><circle cx="170.500" cy="525" r="2.200"/><circle cx="166.500" cy="530.500" r="2.200"/><circle cx="174.500" cy="530.500" r="2.200"/></g>
<rect x="183" y="518" width="19" height="21" rx="2" fill="#f8e5e8"/>
<rect x="190.500" y="523" width="2" height="5" rx="1" fill="#36c5f0"/><rect x="193" y="525.500" width="5" height="2" rx="1" fill="#2eb67d"/><rect x="187" y="528.500" width="5" height="2" rx="1" fill="#e01e5a"/><rect x="193" y="528.500" width="2" height="5" rx="1" fill="#ecb22e"/>
<rect x="190" y="536" width="5" height="1.200" fill="#a8324a"/>
<rect x="208" y="522" width="13" height="13" rx="1" fill="#8d1f2e"/><text x="209" y="531" style="font-size:7px;fill:#eee;font-weight:bold">S|</text>
<rect x="210" y="536" width="8" height="1.200" fill="#555"/>
<path d="M237,522 L242.500,528 237,534 231,528Z" fill="#222"/><path d="M237,522 L239,526 235,526Z" fill="#ddd"/>
<circle cx="258.500" cy="528" r="6" fill="#1f5fe0"/><rect x="254" y="527.300" width="9" height="1.500" fill="#fff"/>
<!-- tray -->
<path d="M848,529.500 L850.500,527 853,529.500" fill="none" stroke="#333" stroke-width=".7"/>
<path d="M858,530 Q858,527 861,527 Q863,524.500 866,527 Q868,527 868,530Z" fill="#1f8fd0"/>
<path d="M872,527 Q876,524 880,527 M873.500,528.500 Q876,527 878.500,528.500 M875.500,530 L876,530.500 876.500,530Z" fill="none" stroke="#555" stroke-width=".7"/>
<path d="M884,527 H885.500 L887.500,525 V531 L885.500,529 H884Z M889,526 Q891,528 889,530" fill="none" stroke="#555" stroke-width=".6"/>
<path d="M896,530 V527 L899,525 H901 L903,527 V530Z" fill="#333"/>
<text x="938" y="525.500" style="text-anchor:end;font-size:5.300px;fill:#555">4:53 PM</text>
<text x="938" y="534" style="text-anchor:end;font-size:5.300px;fill:#555">2/13/2023</text>
<path d="M944,526 H948 V524 H950 V531 H944Z" fill="#333"/><rect x="943" y="532" width="8" height=".8" fill="#555"/>
</svg>
</body></html>
